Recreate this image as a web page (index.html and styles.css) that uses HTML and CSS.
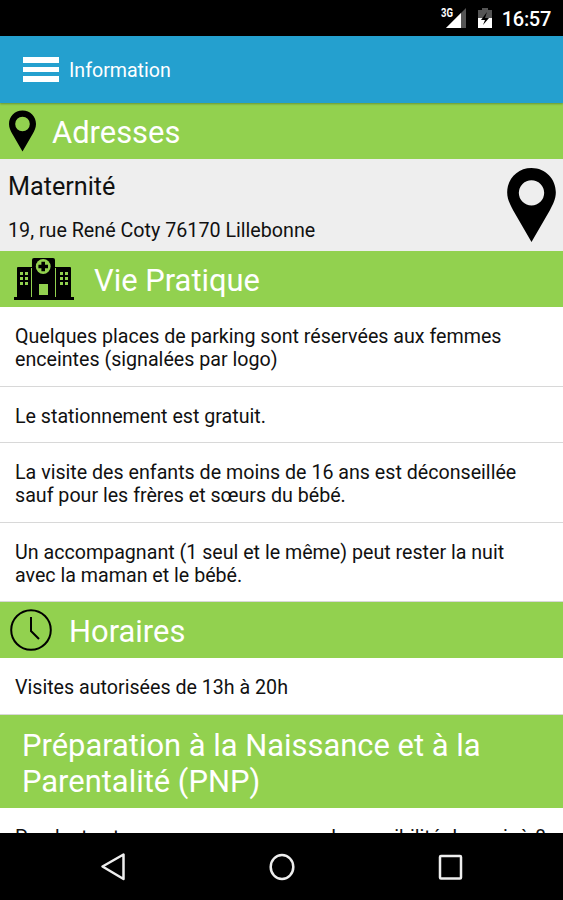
FILE: index.html
```html
<!DOCTYPE html>
<html lang="fr">

<head>
    <meta charset="UTF-8">
    <meta name="viewport" content="width=device-width, initial-scale=1.0">
    <title>Information</title>
    <link rel="stylesheet" href="styles.css">
</head>

<body>
    <div class="statusbar">
        <svg class="signal" width="27" height="22" viewBox="0 0 27 22">
            <path d="M26 2V22H6z" fill="#555" />
            <path d="M21 7V22H6z" fill="#fff" />
            <text x="1" y="11" class="network" textLength="12" lengthAdjust="spacingAndGlyphs">3G</text>
        </svg>
        <svg class="battery" width="14" height="20" viewBox="0 0 14 20">
            <path d="M0 2h4V0h6v2h4v9H0z" fill="#555" />
            <path d="M0 10h14v10H0z" fill="#fff" />
            <path d="M9 4L3 12h4l-2 5 6-7H7z" fill="#000" />
        </svg>
        <span class="clock">16:57</span>
    </div>

    <header class="topbar">
        <button class="menu" aria-label="Menu"><span></span><span></span><span></span></button>
        <h1>Information</h1>
    </header>

    <main class="content">
        <h2 class="section section-adresses">
            <svg width="27" height="42" viewBox="0 0 48 73">
                <path fill-rule="evenodd" d="M24 0C10 0 0 11 0 24c0 7 3 12 6 18l18 31 18-31c3-6 6-11 6-18C48 11 38 0 24 0zm0 11a13 13 0 1 1 0 26 13 13 0 0 1 0-26z" />
            </svg>
            <span>Adresses</span>
        </h2>
        <div class="address">
            <div>
                <h3>Maternité</h3>
                <p>19, rue René Coty 76170 Lillebonne</p>
            </div>
            <svg width="49" height="74" viewBox="0 0 48 73">
                <path fill-rule="evenodd" d="M24 0C10 0 0 11 0 24c0 7 3 12 6 18l18 31 18-31c3-6 6-11 6-18C48 11 38 0 24 0zm0 12a12.5 12.5 0 1 1 0 25 12.5 12.5 0 0 1 0-25z" />
            </svg>
        </div>

        <h2 class="section section-vie">
            <svg width="60" height="42" viewBox="0 0 60 42">
                <path d="M0 39h3V10q0-1 1-1h14V2q0-2 2-2h19q2 0 2 2v7h15q1 0 1 1v29h3v3H0z" />
                <path d="M17.5 10v29M41.5 10v29" stroke="#92d14f" stroke-width="1" />
                <circle cx="29.2" cy="8.5" r="7.4" fill="#92d14f" />
                <path d="M24.4 8.5h9.6M29.2 3.7v9.6" stroke="#000" stroke-width="3.6" />
                <path d="M25 26h9v11h-9zM6 14h3v3H6zM11 14h3v3h-3zM6 19h3v3H6zM11 19h3v3h-3zM6 24h3v3H6zM11 24h3v3h-3zM46 14h3v3h-3zM51 14h3v3h-3zM46 19h3v3h-3zM51 19h3v3h-3zM46 24h3v3h-3zM51 24h3v3h-3z" fill="#92d14f" />
            </svg>
            <span>Vie Pratique</span>
        </h2>
        <ul class="list">
            <li>Quelques places de parking sont réservées aux femmes<br>enceintes (signalées par logo)</li>
            <li>Le stationnement est gratuit.</li>
            <li>La visite des enfants de moins de 16 ans est déconseillée<br>sauf pour les frères et sœurs du bébé.</li>
            <li>Un accompagnant (1 seul et le même) peut rester la nuit<br>avec la maman et le bébé.</li>
        </ul>

        <h2 class="section section-horaires">
            <svg width="42" height="42" viewBox="0 0 42 42" fill="none" stroke="#000" stroke-width="2">
                <circle cx="21" cy="21" r="19.8" />
                <path d="M21 8v14l8 8" />
            </svg>
            <span>Horaires</span>
        </h2>
        <ul class="list">
            <li>Visites autorisées de 13h à 20h</li>
        </ul>

        <h2 class="section section-pnp">
            <span>Préparation à la Naissance et à la<br>Parentalité (PNP)</span>
        </h2>
        <ul class="list">
            <li>Pendant votre grossesse, vous avez la possibilité de venir à 8</li>
        </ul>
    </main>

    <nav class="navbar">
        <svg width="26" height="30" viewBox="0 0 26 30"><path d="M23.5 2.5v24.5L2.5 14.5z" /></svg>
        <svg width="26" height="30" viewBox="0 0 26 30"><ellipse cx="13" cy="15" rx="11.3" ry="12" /></svg>
        <svg width="26" height="30" viewBox="0 0 26 30"><rect x="3" y="4" width="21" height="22.5" rx="1" /></svg>
    </nav>
</body>

</html>
```

FILE: styles.css
```css
* {
    box-sizing: border-box;
}

body {
    margin: 0;
    height: 900px;
    display: flex;
    flex-direction: column;
    overflow: hidden;
    font-family: Roboto, sans-serif;
    color: #111;
    background-color: #fff;
}

h1,
h2,
h3,
p,
ul {
    margin: 0;
    padding: 0;
    font-weight: normal;
}

svg {
    flex: none;
    display: block;
}

.statusbar {
    flex: none;
    height: 36px;
    padding: 2px 12px 0 0;
    display: flex;
    justify-content: flex-end;
    align-items: center;
    background-color: #000;
    color: #fff;
}

.signal {
    margin: -4px 11px 0 0;
}

.network {
    font-size: 12px;
    font-weight: bold;
    fill: #fff;
}

.battery {
    margin: -2px 10px 0 0;
}

.clock {
    font-size: 20px;
    font-weight: 500;
    letter-spacing: -0.3px;
}

.topbar {
    flex: none;
    height: 67px;
    padding: 0 23px;
    display: flex;
    align-items: center;
    background-color: #24a0cf;
    color: #fff;
    box-shadow: 0 1px 2px rgba(0, 0, 0, 0.3);
    z-index: 1;
}

.topbar h1 {
    margin: 2px 0 0 10px;
    font-size: 19.6px;
}

.menu {
    width: 36px;
    padding: 0;
    border: none;
    background: none;
    display: grid;
    gap: 4px;
}

.menu span {
    height: 5.5px;
    background-color: #fff;
}

.content {
    flex: 1;
    min-height: 0;
    overflow: hidden;
}

.section {
    height: 56px;
    display: flex;
    align-items: center;
    background-color: #92d14f;
    color: #fff;
    font-size: 30.9px;
    line-height: 36.5px;
}

.section-adresses {
    padding: 4px 0 0 9px;
    gap: 16px;
}

.section-adresses svg {
    margin-top: -4px;
}

.section-vie {
    padding: 4px 0 0 14px;
    gap: 20px;
}

.section-vie svg {
    margin-top: -4px;
}

.section-horaires {
    padding: 4px 0 0 10px;
    gap: 17px;
}

.section-horaires svg {
    margin-top: -5px;
}

.section-pnp {
    height: 93.5px;
    padding: 5px 22px 0;
}

.address {
    height: 92px;
    padding: 0 7px 0 8px;
    display: flex;
    justify-content: space-between;
    align-items: center;
    background-color: #eee;
}

.address h3 {
    margin-top: 3px;
    font-size: 25.2px;
    line-height: 30px;
}

.address p {
    margin-top: 17px;
    font-size: 19.7px;
    line-height: 23px;
}

.list {
    list-style: none;
    font-size: 19.65px;
    line-height: 23px;
}

.list li {
    padding: 18px 15px 14.6px;
    border-bottom: 1px solid #d8d8d8;
    white-space: nowrap;
}

.navbar {
    flex: none;
    height: 67px;
    padding: 0 100px;
    display: flex;
    justify-content: space-between;
    align-items: center;
    background-color: #000;
}

.navbar svg {
    fill: none;
    stroke: #eee;
    stroke-width: 2.5;
    stroke-linejoin: round;
}
```
